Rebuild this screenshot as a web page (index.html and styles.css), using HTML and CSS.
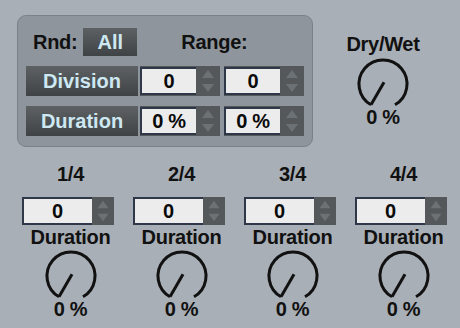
FILE: index.html
```html
<!DOCTYPE html>
<html lang="en">
<head>
    <meta charset="UTF-8">
    <title>Groove Randomizer</title>
    <link rel="stylesheet" href="styles.css">
</head>
<body>
    <div class="device">
        <div class="top">
            <div class="rand-panel">
                <div class="row head">
                    <span class="lbl">Rnd:</span>
                    <button class="btn btn-all">All</button>
                    <span class="lbl range">Range:</span>
                </div>
                <div class="row">
                    <button class="btn btn-wide">Division</button>
                    <div class="numbox"><span class="field">0</span><span class="arrows"><svg viewBox="0 0 24 30" preserveAspectRatio="none"><polygon points="6,12 18,12 12,4"/><polygon points="6,18 18,18 12,26"/></svg></span></div>
                    <div class="numbox second"><span class="field">0</span><span class="arrows"><svg viewBox="0 0 24 30" preserveAspectRatio="none"><polygon points="6,12 18,12 12,4"/><polygon points="6,18 18,18 12,26"/></svg></span></div>
                </div>
                <div class="row">
                    <button class="btn btn-wide">Duration</button>
                    <div class="numbox"><span class="field">0 %</span><span class="arrows"><svg viewBox="0 0 24 30" preserveAspectRatio="none"><polygon points="6,12 18,12 12,4"/><polygon points="6,18 18,18 12,26"/></svg></span></div>
                    <div class="numbox second"><span class="field">0 %</span><span class="arrows"><svg viewBox="0 0 24 30" preserveAspectRatio="none"><polygon points="6,12 18,12 12,4"/><polygon points="6,18 18,18 12,26"/></svg></span></div>
                </div>
            </div>
            <div class="drywet">
                <span class="caption">Dry/Wet</span>
                <svg class="knob" viewBox="0 0 56 56"><path d="M16 48.8 A24 24 0 1 1 40 48.8"/><path d="M29 26.3 L16 48.8"/></svg>
                <span class="value">0 %</span>
            </div>
        </div>

        <div class="steps">
            <div class="step">
                <span class="step-label">1/4</span>
                <div class="numbox numbox-sm"><span class="field">0</span><span class="arrows"><svg viewBox="0 0 24 30" preserveAspectRatio="none"><polygon points="6,12 18,12 12,4"/><polygon points="6,18 18,18 12,26"/></svg></span></div>
                <span class="caption">Duration</span>
                <svg class="knob" viewBox="0 0 56 56"><path d="M16 48.8 A24 24 0 1 1 40 48.8"/><path d="M29 26.3 L16 48.8"/></svg>
                <span class="value">0 %</span>
            </div>
            <div class="step">
                <span class="step-label">2/4</span>
                <div class="numbox numbox-sm"><span class="field">0</span><span class="arrows"><svg viewBox="0 0 24 30" preserveAspectRatio="none"><polygon points="6,12 18,12 12,4"/><polygon points="6,18 18,18 12,26"/></svg></span></div>
                <span class="caption">Duration</span>
                <svg class="knob" viewBox="0 0 56 56"><path d="M16 48.8 A24 24 0 1 1 40 48.8"/><path d="M29 26.3 L16 48.8"/></svg>
                <span class="value">0 %</span>
            </div>
            <div class="step">
                <span class="step-label">3/4</span>
                <div class="numbox numbox-sm"><span class="field">0</span><span class="arrows"><svg viewBox="0 0 24 30" preserveAspectRatio="none"><polygon points="6,12 18,12 12,4"/><polygon points="6,18 18,18 12,26"/></svg></span></div>
                <span class="caption">Duration</span>
                <svg class="knob" viewBox="0 0 56 56"><path d="M16 48.8 A24 24 0 1 1 40 48.8"/><path d="M29 26.3 L16 48.8"/></svg>
                <span class="value">0 %</span>
            </div>
            <div class="step">
                <span class="step-label">4/4</span>
                <div class="numbox numbox-sm"><span class="field">0</span><span class="arrows"><svg viewBox="0 0 24 30" preserveAspectRatio="none"><polygon points="6,12 18,12 12,4"/><polygon points="6,18 18,18 12,26"/></svg></span></div>
                <span class="caption">Duration</span>
                <svg class="knob" viewBox="0 0 56 56"><path d="M16 48.8 A24 24 0 1 1 40 48.8"/><path d="M29 26.3 L16 48.8"/></svg>
                <span class="value">0 %</span>
            </div>
        </div>
    </div>
</body>
</html>
```

FILE: styles.css
```css
body {
    margin: 0;
    background-color: #a9afb6;
    font-family: "Liberation Sans", Arial, sans-serif;
    font-weight: bold;
    font-size: 20px;
    letter-spacing: -0.3px;
    color: #111;
}

.device {
    width: 460px;
    height: 328px;
    overflow: hidden;
}

.top {
    display: flex;
    align-items: flex-start;
    padding: 15px 0 0 17px;
}

.rand-panel {
    box-sizing: border-box;
    width: 296px;
    height: 132px;
    border: 1px solid #7b8188;
    border-radius: 9px;
    background-color: #8e959c;
    padding: 12px 8px 0 8px;
    display: flex;
    flex-direction: column;
    gap: 10px;
}

.row {
    display: flex;
    align-items: center;
    gap: 2px;
}

.head {
    height: 28px;
    padding-left: 7px;
}

.lbl {
    line-height: 22px;
}

.btn-all {
    margin-left: 4px;
}

.range {
    margin-left: 42px;
}

.btn {
    border: none;
    padding: 0;
    font: inherit;
    color: #cde8f2;
    background: linear-gradient(#5d6163, #3f4345);
    display: flex;
    align-items: center;
    justify-content: center;
}

.btn-all {
    width: 54px;
    height: 28px;
}

.btn-wide {
    width: 112px;
    height: 30px;
}

.numbox {
    display: flex;
    align-items: center;
    height: 30px;
    background-color: #54585b;
}

.numbox.second {
    margin-left: 2px;
}

.field {
    box-sizing: border-box;
    width: 56px;
    height: 28px;
    border: 2px solid #2e3848;
    border-right: none;
    background-color: #ececec;
    color: #0a0a0a;
    display: flex;
    align-items: center;
    justify-content: center;
}

.arrows {
    width: 24px;
    height: 30px;
}

.arrows svg {
    display: block;
    width: 100%;
    height: 100%;
    fill: #6c7175;
}

.drywet {
    width: 100px;
    margin: 18px 0 0 20px;
    display: flex;
    flex-direction: column;
    align-items: center;
}

.caption {
    line-height: 22px;
}

.drywet .knob {
    margin-top: 1px;
}

.knob {
    display: block;
    width: 56px;
    height: 56px;
    fill: none;
    stroke: #111;
    stroke-width: 3;
}

.value {
    line-height: 22px;
    margin-top: -6px;
}

.steps {
    display: flex;
    padding: 16px 0 0 15px;
}

.step {
    width: 111px;
    display: flex;
    flex-direction: column;
    align-items: center;
}

.step-label {
    line-height: 22px;
}

.numbox-sm {
    height: 28px;
    margin: 12px 6px 0 0;
}

.numbox-sm .field {
    width: 70px;
}

.numbox-sm .arrows {
    width: 22px;
    height: 28px;
}

.step .caption {
    margin-top: 1px;
}
```
